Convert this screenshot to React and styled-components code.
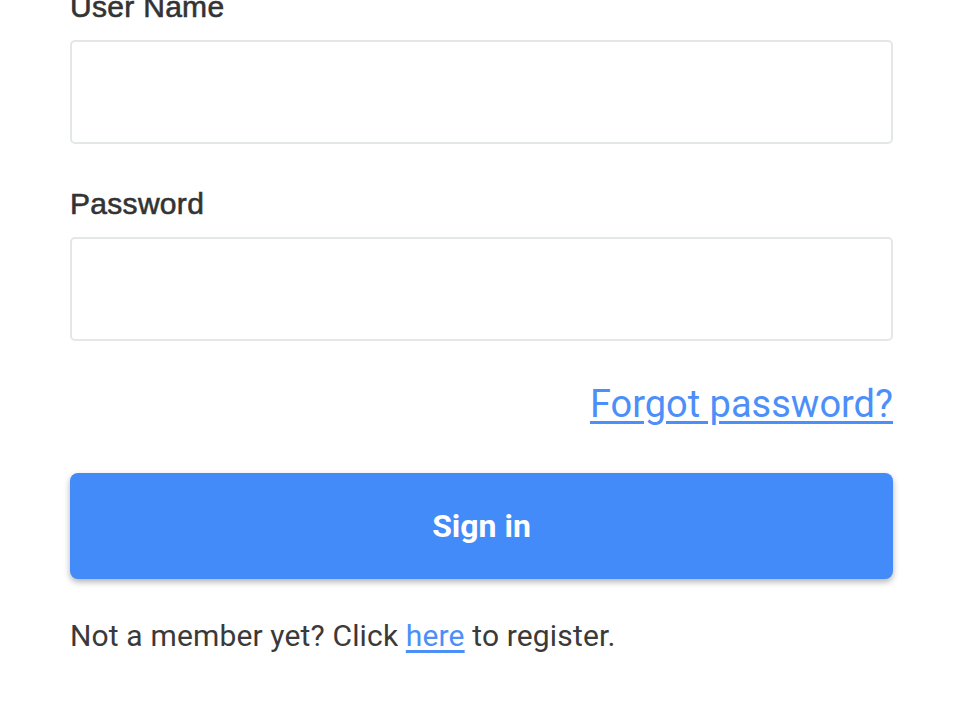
import styled, { createGlobalStyle } from 'styled-components';

const GlobalStyle = createGlobalStyle`
  html, body {
    margin: 0;
    padding: 0;
    background: #ffffff;
    font-family: Roboto, "Liberation Sans", Arial, sans-serif;
  }
`;

const Page = styled.div`
  width: 823px;
  margin-left: 70px;
  margin-top: -12px;
`;

const Field = styled.div`
  display: flex;
  flex-direction: column;
  margin-bottom: 41px;
`;

const Label = styled.label`
  font-family: "Liberation Sans", Arial, sans-serif;
  font-size: 30px;
  line-height: 38px;
  letter-spacing: 0.3px;
  color: #333333;
  margin-bottom: 14px;
  -webkit-text-stroke: 0.6px #333333;
`;

const Input = styled.input`
  box-sizing: border-box;
  height: 104px;
  width: 100%;
  border: 2px solid #e3e7e8;
  border-radius: 5px;
  background: #fff;
  outline: none;
  padding: 0 20px;
  font-size: 28px;
`;

const ForgotRow = styled.div`
  display: flex;
  justify-content: flex-end;
  margin-top: 1px;
`;

const Link = styled.a`
  color: #4d8ff8;
  text-decoration: underline;
  text-underline-offset: 4px;
  cursor: pointer;
`;

const ForgotLink = styled(Link)`
  font-size: 38px;
  line-height: 44px;
`;

const SignInButton = styled.button`
  margin-top: 47px;
  width: 100%;
  height: 106px;
  border: none;
  border-radius: 8px;
  background: #428bf9;
  color: #fff;
  font-family: Roboto, "Liberation Sans", Arial, sans-serif;
  font-size: 32px;
  font-weight: 700;
  box-shadow: 0 3px 6px rgba(0, 0, 0, 0.3);
  cursor: pointer;
`;

const Footer = styled.p`
  margin: 39px 0 0;
  font-size: 30px;
  line-height: 36px;
  letter-spacing: 0.15px;
  color: #3a3a3a;
`;

export default function App() {
  return (
    <>
      <GlobalStyle />
      <Page>
        <Field>
          <Label htmlFor="username">User Name</Label>
          <Input id="username" type="text" />
        </Field>
        <Field>
          <Label htmlFor="password">Password</Label>
          <Input id="password" type="password" />
        </Field>
        <ForgotRow>
          <ForgotLink>Forgot password?</ForgotLink>
        </ForgotRow>
        <SignInButton>Sign in</SignInButton>
        <Footer>
          Not a member yet? Click <Link>here</Link> to register.
        </Footer>
      </Page>
    </>
  );
}
